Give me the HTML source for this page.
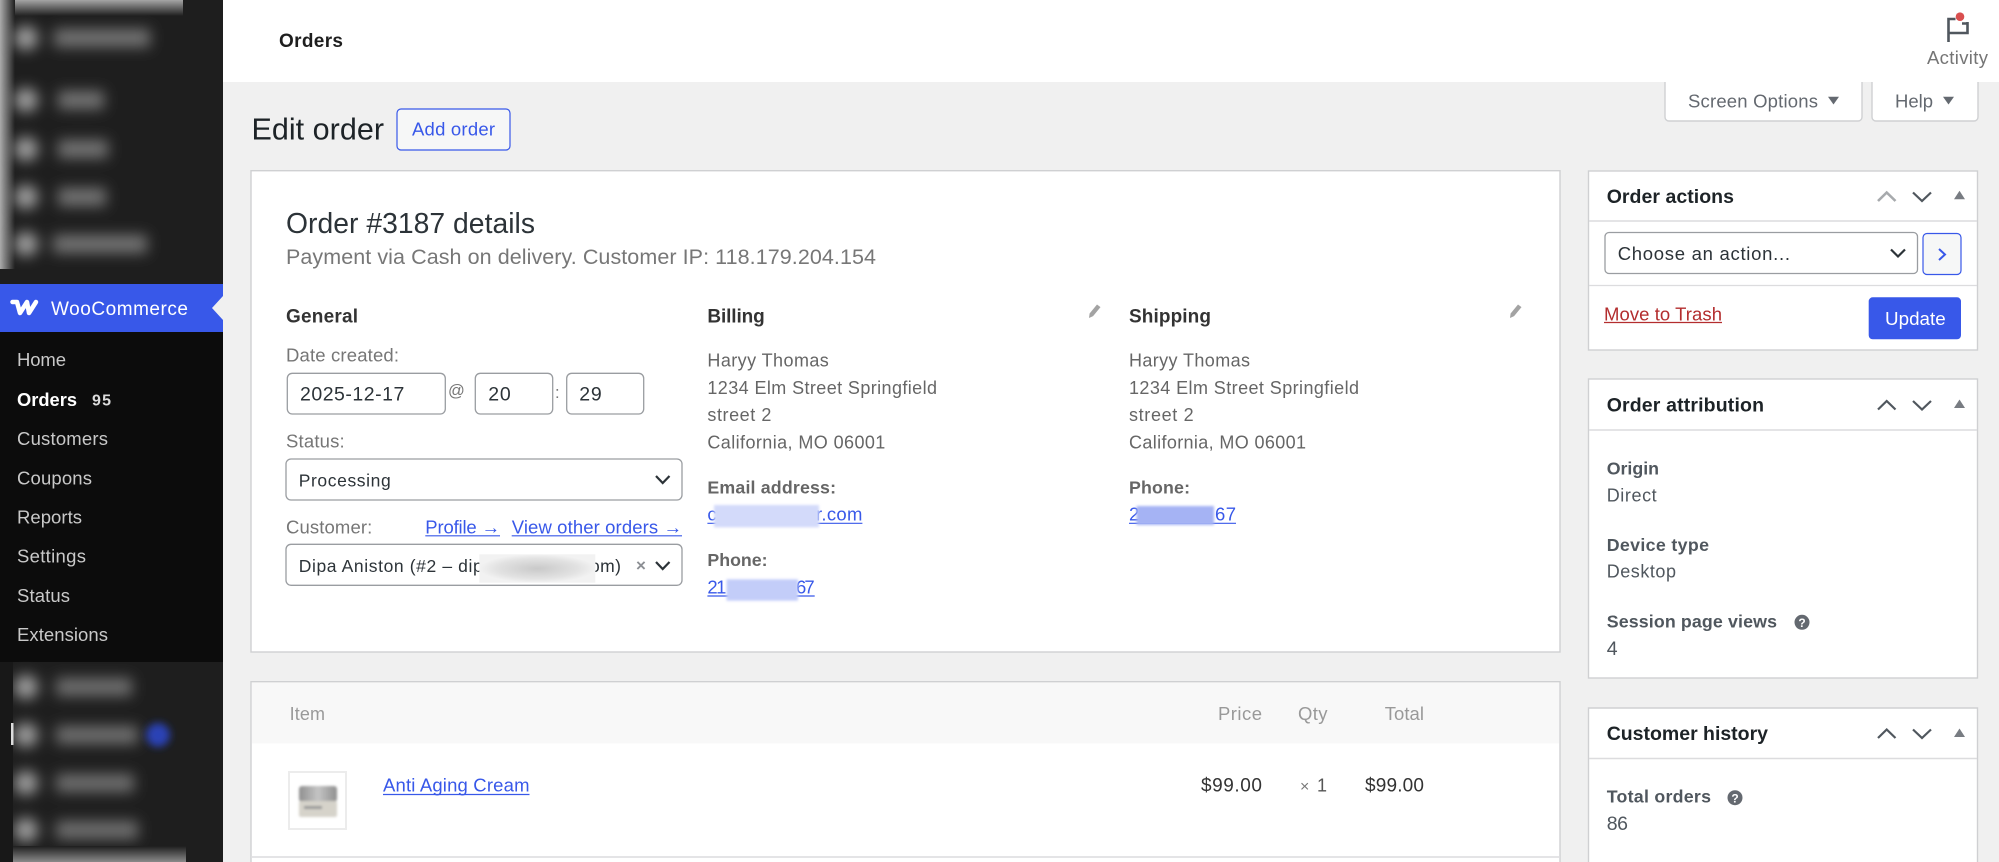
<!DOCTYPE html>
<html lang="en"><head><meta charset="utf-8"><title>Edit order</title>
<style>
html,body{margin:0;padding:0;background:#f0f0f0;width:1999px;height:862px;overflow:hidden}
svg{display:block;filter:blur(.35px)}
text{font-family:"Liberation Sans",Arial,sans-serif;font-size:18.500px;fill:#646970}
.b{font-weight:700}
.m{fill:#c9c9c9;font-size:18.500px}
.h{fill:#1d2327;font-weight:700;font-size:19.500px}
.l{fill:#767676;font-size:18.500px}
.v{fill:#2c3338;font-size:17.500px}
.n{fill:#2c3338;font-size:19.500px}
.a{fill:#3858e9;font-size:18.500px}
.g{fill:#50575e;font-weight:700;font-size:17.800px}
.d{fill:#50575e;font-size:18px}
.c{fill:none;stroke:#50575e;stroke-width:2.200}
.box{fill:#fff;stroke:#9a9da1;stroke-width:1.300}
.p{fill:#fff;stroke:#cfd0d2;stroke-width:1.400}
.u{stroke:#3858e9;stroke-width:1.200}
</style></head><body>
<svg width="1999" height="862" viewBox="0 0 1999 862" xmlns="http://www.w3.org/2000/svg">
<defs>
<filter id="b6" filterUnits="userSpaceOnUse" x="0" y="0" width="223" height="862"><feGaussianBlur stdDeviation="7"/></filter>
<filter id="b3" x="-100%" y="-100%" width="300%" height="300%"><feGaussianBlur stdDeviation="4"/></filter>
<filter id="b1" x="-10%" y="-20%" width="120%" height="140%"><feGaussianBlur stdDeviation="1.200"/></filter>
<linearGradient id="top" x1="0" y1="0" x2="0" y2="1"><stop offset="0" stop-color="#a5a5a5"/><stop offset="1" stop-color="#1e1e1e"/></linearGradient>
<linearGradient id="left" x1="0" y1="0" x2="1" y2="0"><stop offset="0" stop-color="#ababab"/><stop offset="1" stop-color="#1e1e1e"/></linearGradient>
<linearGradient id="bot" x1="0" y1="0" x2="0" y2="1"><stop offset="0" stop-color="#1e1e1e"/><stop offset="1" stop-color="#8a8a8a"/></linearGradient>
<linearGradient id="lid" x1="0" y1="0" x2="1" y2="0"><stop offset="0" stop-color="#8f8f8f"/><stop offset=".5" stop-color="#c4c4c4"/><stop offset="1" stop-color="#8f8f8f"/></linearGradient>
<radialGradient id="gr"><stop offset="0" stop-color="#c9c9c9"/><stop offset=".7" stop-color="#e2e2e2"/><stop offset="1" stop-color="#f2f2f2"/></radialGradient>
</defs>

<!-- page -->
<rect width="1999" height="862" fill="#f0f0f0"/>

<!-- sidebar -->
<rect width="223" height="862" fill="#1e1e1e"/>
<rect x="0" y="0" width="183" height="16" fill="url(#top)"/>
<rect x="0" y="0" width="15" height="269" fill="url(#left)"/>
<g filter="url(#b6)" fill="#a0a0a0">
<circle cx="26" cy="38" r="12"/><rect x="54" y="29" width="96" height="18" fill="#747474"/>
<circle cx="26" cy="100" r="12"/><rect x="58" y="91" width="46" height="18" fill="#747474"/>
<circle cx="26" cy="149" r="12"/><rect x="58" y="140" width="50" height="18" fill="#747474"/>
<circle cx="26" cy="197" r="12"/><rect x="58" y="188" width="48" height="18" fill="#747474"/>
<circle cx="26" cy="244" r="12"/><rect x="53" y="235" width="94" height="18" fill="#747474"/>
</g>
<rect x="0" y="284" width="223" height="48" fill="#3858e9"/>
<path d="M12.500 302H17L20 313L27 302L29 313L36 302" fill="none" stroke="#fff" stroke-width="4.500" stroke-linejoin="round" stroke-linecap="round"/>
<text x="51" y="315" style="font-size:19px;fill:#fff" textLength="137">WooCommerce</text>
<polygon points="223,296 212,308 223,320" fill="#f0f0f0"/>
<rect x="0" y="332" width="223" height="330" fill="#0c0c0c"/>
<text class="m" x="17" y="366" textLength="49">Home</text>
<text class="b" style="font-size:18.300px;fill:#fff" x="17" y="406" textLength="60">Orders</text>
<text class="b" style="font-size:16px;fill:#ddd" x="92" y="405.500" textLength="19">95</text>
<text class="m" x="17" y="445" textLength="91">Customers</text>
<text class="m" x="17" y="484.300" textLength="75">Coupons</text>
<text class="m" x="17" y="523.700" textLength="65">Reports</text>
<text class="m" x="17" y="562.700" textLength="69">Settings</text>
<text class="m" x="17" y="602" textLength="53">Status</text>
<text class="m" x="17" y="641" textLength="91">Extensions</text>
<g filter="url(#b6)" fill="#a0a0a0">
<circle cx="26" cy="687" r="12"/><rect x="56" y="678" width="76" height="18" fill="#707070"/>
<circle cx="26" cy="735" r="12"/><rect x="56" y="726" width="82" height="18" fill="#707070"/>
<circle cx="26" cy="783" r="12"/><rect x="56" y="774" width="78" height="18" fill="#707070"/>
<circle cx="26" cy="830" r="12"/><rect x="56" y="821" width="82" height="18" fill="#707070"/>
</g>
<rect x="0" y="662" width="13" height="200" fill="#181818"/>
<rect x="11" y="723" width="2.500" height="22" fill="#ddd"/>
<circle cx="158" cy="735" r="12" fill="#2b43b5" filter="url(#b3)"/>
<rect x="13" y="846" width="173" height="16" fill="url(#bot)"/>

<!-- top bar -->
<rect x="223" y="0" width="1776" height="82" fill="#fff"/>
<text class="b" style="font-size:19px;fill:#1e1e1e" x="279" y="47" textLength="64">Orders</text>
<path d="M1948.500 42V19h7M1967.500 22v11h-19M1962 23.500h5" fill="none" stroke="#50575e" stroke-width="2.600"/>
<circle cx="1960" cy="16.700" r="4.300" fill="#d94f4f"/>
<text x="1927" y="64" style="font-size:18.500px;fill:#757575" textLength="61">Activity</text>

<!-- screen tabs -->
<path d="M1665 82v35a4 4 0 0 0 4 4h189a4 4 0 0 0 4-4V82" fill="#fff" stroke="#cfd0d2" stroke-width="1.400"/>
<text x="1688" y="107.500" textLength="130">Screen Options</text>
<polygon points="1828,96.700 1839,96.700 1833.500,104.500" fill="#646970"/>
<path d="M1872 82v35a4 4 0 0 0 4 4h98a4 4 0 0 0 4-4V82" fill="#fff" stroke="#cfd0d2" stroke-width="1.400"/>
<text x="1895" y="107.500" textLength="38">Help</text>
<polygon points="1943,96.700 1954,96.700 1948.500,104.500" fill="#646970"/>

<!-- heading -->
<text x="251.500" y="139.500" style="font-size:30.500px;fill:#1d2327" textLength="132.500">Edit order</text>
<rect x="397" y="109" width="113" height="41" rx="4" fill="#f6f7f7" stroke="#3858e9" stroke-width="1.200"/>
<text class="a" x="412" y="135.500" textLength="83">Add order</text>

<!-- order data panel -->
<rect class="p" x="251" y="170.700" width="1309" height="481.300"/>
<text x="286" y="233" style="font-size:28.300px;fill:#2c3338" textLength="249">Order #3187 details</text>
<text x="286" y="264" style="font-size:21.500px;fill:#777" textLength="590">Payment via Cash on delivery. Customer IP: 118.179.204.154</text>

<text class="b" x="286" y="322.500" style="font-size:19px;fill:#333" textLength="72">General</text>
<text class="l" x="286" y="361.700" textLength="113">Date created:</text>
<rect class="box" x="287.300" y="373.300" width="158" height="40.700" rx="5"/>
<text class="n" x="300" y="400.700" textLength="104.300">2025-12-17</text>
<text x="448" y="396" style="font-size:16.600px;fill:#777" textLength="15">@</text>
<rect class="box" x="475.300" y="373.300" width="77.400" height="40.700" rx="5"/>
<text class="n" x="488.300" y="400.700" textLength="22.400">20</text>
<text x="555" y="398" style="font-size:16.600px;fill:#777">:</text>
<rect class="box" x="566.700" y="373.300" width="77" height="40.700" rx="5"/>
<text class="n" x="579.300" y="400.700" textLength="22.400">29</text>

<text class="l" x="286" y="447.300" textLength="58.700">Status:</text>
<rect class="box" x="286" y="459" width="396" height="41" rx="5"/>
<text class="v" x="298.700" y="486.700" textLength="92">Processing</text>
<polyline class="c" points="656,476 662.700,483 669.500,476" style="stroke:#2c3338"/>

<text class="l" x="286" y="533.300" textLength="86.300">Customer:</text>
<text class="a" x="425.300" y="533.300" textLength="74.700">Profile →</text>
<line class="u" x1="425.300" y1="535.800" x2="500" y2="535.800"/>
<text class="a" x="511.700" y="533.300" textLength="170.300">View other orders →</text>
<line class="u" x1="511.700" y1="535.800" x2="682" y2="535.800"/>
<rect class="box" x="286" y="544.300" width="396" height="41" rx="5"/>
<text class="v" x="298.700" y="572" textLength="184">Dipa Aniston (#2 – dip</text>
<text class="v" x="590" y="572" textLength="31">om)</text>
<rect x="479.300" y="554.300" width="116" height="28.400" fill="url(#gr)"/>
<text x="636" y="571" style="font-size:17px;fill:#8c8f94;font-weight:700">×</text>
<polyline class="c" points="656,562 662.700,569 669.500,562" style="stroke:#2c3338"/>

<!-- billing -->
<text class="b" x="707.400" y="322.500" style="font-size:19px;fill:#333" textLength="57.300">Billing</text>
<path d="M1089 318l.6-4.500 7.400-9 3.500 2.600-7.400 9z" fill="#a3a3a3"/>
<text class="d" x="707.400" y="366.700" style="fill:#666" textLength="121.400">Haryy Thomas</text>
<text class="d" x="707.400" y="394" style="fill:#666" textLength="229.600">1234 Elm Street Springfield</text>
<text class="d" x="707.400" y="421" style="fill:#666" textLength="64">street 2</text>
<text class="d" x="707.400" y="448.300" style="fill:#666" textLength="177.900">California, MO 06001</text>
<text class="g" x="707.400" y="493.300" style="fill:#666" textLength="128.600">Email address:</text>
<text class="a" x="707.400" y="520.700" textLength="10">c</text>
<text class="a" x="816" y="520.700" textLength="46.400">r.com</text>
<line class="u" x1="707.400" y1="523.300" x2="862.400" y2="523.300"/>
<rect x="714" y="505" width="105" height="22.300" fill="#d3dafa" filter="url(#b1)"/>
<text class="g" x="707.400" y="566" style="fill:#666" textLength="60.100">Phone:</text>
<text class="a" x="707.400" y="593.300" textLength="19">21</text>
<text class="a" x="796" y="593.300" textLength="18.700">67</text>
<line class="u" x1="707.400" y1="596" x2="814.700" y2="596"/>
<rect x="726.500" y="579.300" width="71.500" height="21.400" fill="#c3cdf9" filter="url(#b1)"/>

<!-- shipping -->
<text class="b" x="1129" y="322.500" style="font-size:19px;fill:#333" textLength="82">Shipping</text>
<path d="M1510 318l.6-4.500 7.400-9 3.500 2.600-7.400 9z" fill="#a3a3a3"/>
<text class="d" x="1129" y="366.700" style="fill:#666" textLength="121">Haryy Thomas</text>
<text class="d" x="1129" y="394" style="fill:#666" textLength="230">1234 Elm Street Springfield</text>
<text class="d" x="1129" y="421" style="fill:#666" textLength="64.600">street 2</text>
<text class="d" x="1129" y="448.300" style="fill:#666" textLength="177">California, MO 06001</text>
<text class="g" x="1129" y="493.300" style="fill:#666" textLength="61">Phone:</text>
<text class="a" x="1129" y="520.700" textLength="10">2</text>
<text class="a" x="1215" y="520.700" textLength="21">67</text>
<line class="u" x1="1129" y1="523.300" x2="1236" y2="523.300"/>
<rect x="1136.500" y="506" width="77.500" height="19" fill="#a5b3f4" filter="url(#b1)"/>

<!-- items panel -->
<path class="p" d="M251 862V681.700H1560V862"/>
<rect x="252" y="682.500" width="1307" height="61" fill="#f8f8f8"/>
<text x="289.600" y="720" style="font-size:18px;fill:#999" textLength="35.400">Item</text>
<text x="1218" y="720" style="fill:#999" textLength="44">Price</text>
<text x="1298" y="720" style="fill:#999" textLength="29.500">Qty</text>
<text x="1384.700" y="720" style="fill:#999" textLength="39.300">Total</text>
<rect x="289" y="772" width="57" height="57" fill="#fff" stroke="#ececec" stroke-width="2"/>
<g filter="url(#b1)">
<rect x="299" y="786" width="38" height="16" rx="3" fill="url(#lid)"/>
<rect x="299" y="801" width="38" height="16" rx="2" fill="#d6d3ca"/>
<rect x="304" y="806" width="18" height="3" fill="#999"/>
</g>
<text class="a" x="383" y="791.700" textLength="146.500">Anti Aging Cream</text>
<line class="u" x1="383" y1="794.500" x2="529.500" y2="794.500"/>
<text x="1201" y="791.700" style="font-size:19px;fill:#333" textLength="61">$99.00</text>
<text x="1300" y="791.700" style="font-size:16px;fill:#777">×</text>
<text x="1317" y="791.700" style="font-size:18px;fill:#555">1</text>
<text x="1365" y="791.700" style="font-size:19px;fill:#333" textLength="59">$99.00</text>
<line x1="252" y1="857" x2="1559" y2="857" stroke="#dcdcde" stroke-width="1.500"/>

<!-- order actions -->
<rect class="p" x="1588.500" y="171" width="389" height="179"/>
<line x1="1589" y1="221" x2="1977" y2="221" stroke="#dcdcde" stroke-width="1.500"/>
<text class="h" x="1606.700" y="203" textLength="127.300">Order actions</text>
<polyline class="c" points="1878,201 1886.700,192.500 1895.500,201" style="stroke:#a7aaad;stroke-width:2.600"/>
<polyline class="c" points="1913,192.500 1922,201 1931,192.500"/>
<polygon points="1954,199.300 1965,199.300 1959.500,190.700" fill="#787c82"/>
<rect class="box" x="1605" y="232.500" width="312.500" height="41" rx="4"/>
<text class="v" x="1617.700" y="260" style="font-size:18.500px" textLength="172.300">Choose an action...</text>
<polyline class="c" points="1891,249.500 1898,256.500 1905,249.500" style="stroke:#2c3338"/>
<rect x="1923" y="233.500" width="38" height="41" rx="4" fill="#f6f7f7" stroke="#3858e9" stroke-width="1.200"/>
<polyline points="1939,249 1945,254.500 1939,260" fill="none" stroke="#3858e9" stroke-width="2"/>
<line x1="1589" y1="285.500" x2="1977" y2="285.500" stroke="#dcdcde" stroke-width="1.200"/>
<text x="1604" y="320.700" style="fill:#b32d2e" textLength="118">Move to Trash</text>
<line x1="1604" y1="322.500" x2="1722" y2="322.500" stroke="#b32d2e" stroke-width="1.200"/>
<rect x="1868.700" y="297.300" width="92.300" height="42" rx="4" fill="#3858e9"/>
<text x="1885" y="325" style="font-size:18.800px;fill:#fff" textLength="60.700">Update</text>

<!-- order attribution -->
<rect class="p" x="1588.500" y="379" width="389" height="299"/>
<line x1="1589" y1="430" x2="1977" y2="430" stroke="#dcdcde" stroke-width="1.500"/>
<text class="h" x="1606.700" y="411.700" textLength="157.300">Order attribution</text>
<polyline class="c" points="1878,409.500 1886.700,401 1895.500,409.500"/>
<polyline class="c" points="1913,401 1922,409.500 1931,401"/>
<polygon points="1954,408 1965,408 1959.500,399.500" fill="#787c82"/>
<text class="g" x="1606.700" y="474.300" textLength="52.300">Origin</text>
<text class="d" x="1606.700" y="501.700" textLength="50">Direct</text>
<text class="g" x="1606.700" y="551" textLength="102.300">Device type</text>
<text class="d" x="1606.700" y="577.700" textLength="69.300">Desktop</text>
<text class="g" x="1606.700" y="627.700" textLength="170.300">Session page views</text>
<circle cx="1802" cy="622.300" r="7.500" fill="#646970"/>
<text x="1802" y="627" text-anchor="middle" style="font-size:12px;font-weight:700;fill:#fff">?</text>
<text class="n" x="1606.700" y="655" style="fill:#50575e" textLength="10">4</text>

<!-- customer history -->
<path class="p" d="M1588.500 862V708H1977.500V862"/>
<line x1="1589" y1="758.500" x2="1977" y2="758.500" stroke="#dcdcde" stroke-width="1.500"/>
<text class="h" x="1606.700" y="740" textLength="161.300">Customer history</text>
<polyline class="c" points="1878,738 1886.700,729.500 1895.500,738"/>
<polyline class="c" points="1913,729.500 1922,738 1931,729.500"/>
<polygon points="1954,737 1965,737 1959.500,728.500" fill="#787c82"/>
<text class="g" x="1606.700" y="802.700" textLength="104.300">Total orders</text>
<circle cx="1735" cy="797.700" r="7.500" fill="#646970"/>
<text x="1735" y="802.500" text-anchor="middle" style="font-size:12px;font-weight:700;fill:#fff">?</text>
<text class="n" x="1606.700" y="830" style="fill:#50575e" textLength="21.300">86</text>
</svg>
</body></html>
